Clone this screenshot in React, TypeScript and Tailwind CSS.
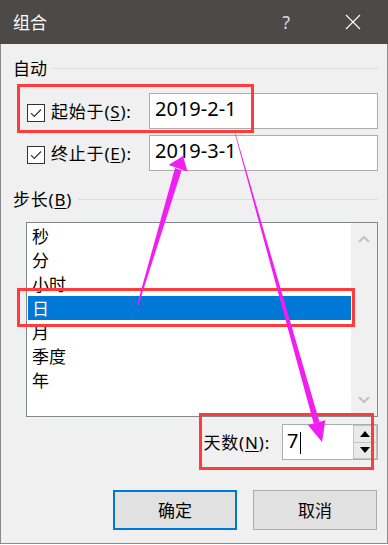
import React from 'react';

const FONT = '"Noto Sans", "Noto Sans CJK SC", sans-serif';

function CheckBox() {
  return (
    <div className="w-[18px] h-[18px] border border-[#333333] bg-white flex items-center justify-center shrink-0">
      <svg width="14" height="14" viewBox="0 0 14 14">
        <path d="M2 7.2 L5.3 10.5 L12 3.5" fill="none" stroke="#333333" strokeWidth="1.2" />
      </svg>
    </div>
  );
}

function Accel({ pre, ch }: { pre: string; ch: string }) {
  return (
    <span className="tracking-[0.8px]">
      {pre}(<span className="underline underline-offset-2">{ch}</span>):
    </span>
  );
}

const ITEMS = ['秒', '分', '小时', '日', '月', '季度', '年'];

export default function App() {
  return (
    <div className="relative w-[388px] h-[545px] bg-white text-[17px] text-black" style={{ fontFamily: FONT }}>
      {/* title bar */}
      <div className="h-[44px] bg-[#4b4a48] flex items-center text-white pl-[13px]">
        <span className="flex-1 leading-none">组合</span>
        <span className="text-[#d8d8d8] text-[18px] mr-[55px] leading-none">?</span>
        <svg width="16" height="16" viewBox="0 0 16 16" className="mr-[27px]">
          <path d="M1 1 L15 15 M15 1 L1 15" stroke="#ffffff" strokeWidth="1.1" />
        </svg>
      </div>

      {/* body */}
      <div className="h-[500px] bg-[#f0f0f0] border-x border-b border-[#8a8a8a] pl-[12px] pr-[9px] flex flex-col">
        <div className="mt-[15px] h-[18px] flex items-center">
          <span className="leading-none">自动</span>
          <div className="flex-1 h-px bg-[#dcdcdc] ml-[5px]" />
        </div>

        <div className="mt-[16px] h-[36px] flex items-center">
          <div className="ml-[14px] mt-[3px]"><CheckBox /></div>
          <div className="w-[98px] ml-[6px] leading-none"><Accel pre="起始于" ch="S" /></div>
          <div className="flex-1 h-[36px] bg-white border border-[#adadad] flex items-center pl-[5px] text-[20px] leading-none pb-[4px]">2019-2-1</div>
        </div>

        <div className="mt-[6px] h-[36px] flex items-center">
          <div className="ml-[14px] mt-[3px]"><CheckBox /></div>
          <div className="w-[98px] ml-[6px] leading-none"><Accel pre="终止于" ch="E" /></div>
          <div className="flex-1 h-[36px] bg-white border border-[#adadad] flex items-center pl-[5px] text-[20px] leading-none pb-[4px]">2019-3-1</div>
        </div>

        <div className="mt-[19px] h-[18px] flex items-center">
          <span className="leading-none tracking-[0.8px]">步长(<span className="underline underline-offset-2">B</span>)</span>
          <div className="flex-1 h-px bg-[#dcdcdc] ml-[6px]" />
        </div>

        <div className="mt-[14px] ml-[13px] h-[195px] bg-white border border-[#828790] flex">
          <div className="flex-1 flex flex-col pt-[1px] pl-[1px]">
            {ITEMS.map((it) => (
              <div
                key={it}
                className={
                  'h-[24px] flex items-center pl-[4px] leading-none ' +
                  (it === '日' ? 'bg-[#0078d7] text-white' : '')
                }
              >
                {it}
              </div>
            ))}
          </div>
          <div className="w-[26px] bg-[#f0f0f0] flex flex-col items-center justify-between py-[12px]">
            <svg width="12" height="8" viewBox="0 0 12 8">
              <path d="M1 7 L6 2 L11 7" fill="none" stroke="#c2c2c2" strokeWidth="2" />
            </svg>
            <svg width="12" height="8" viewBox="0 0 12 8">
              <path d="M1 1 L6 6 L11 1" fill="none" stroke="#c2c2c2" strokeWidth="2" />
            </svg>
          </div>
        </div>

        <div className="mt-[7px] h-[36px] flex items-center justify-end">
          <div className="leading-none mr-[12px]"><Accel pre="天数" ch="N" /></div>
          <div className="w-[96px] h-[36px] bg-white border border-[#adadad] flex">
            <div className="flex-1 flex items-center pl-[4px] text-[20px] leading-none pb-[3px]">
              7<span className="inline-block w-px h-[22px] bg-black ml-[2px] mt-[4px]" />
            </div>
            <div className="w-[24px] flex flex-col">
              <div className="flex-1 bg-[#eaeaea] border border-[#c4c4c4] flex items-center justify-center">
                <svg width="10" height="6" viewBox="0 0 10 6"><path d="M0 6 L5 0 L10 6 Z" fill="#000" /></svg>
              </div>
              <div className="flex-1 bg-[#eaeaea] border border-t-0 border-[#c4c4c4] flex items-center justify-center">
                <svg width="10" height="6" viewBox="0 0 10 6"><path d="M0 0 L5 6 L10 0 Z" fill="#000" /></svg>
              </div>
            </div>
          </div>
        </div>

        <div className="mt-[30px] flex justify-end gap-[16px] pr-px">
          <button className="w-[124px] h-[40px] bg-[#e1e1e1] border-2 border-[#0078d7] leading-none">确定</button>
          <button className="w-[124px] h-[40px] bg-[#e1e1e1] border border-[#adadad] leading-none">取消</button>
        </div>
      </div>

      {/* annotations */}
      <div className="absolute left-[17px] top-[84px] w-[237px] h-[49px] border-[3px] border-[#ff3b3b]" />
      <div className="absolute left-[17px] top-[288px] w-[338px] h-[39px] border-[3px] border-[#ff3b3b]" />
      <div className="absolute left-[199px] top-[413px] w-[175px] h-[57px] border-[3px] border-[#ff3b3b]" />
      <svg className="absolute inset-0 pointer-events-none" width="388" height="545">
        <polygon points="137,305 138.5,305 181.5,170.5 175,168" fill="#f01ef0" />
        <polygon points="183,156 168.5,165 187.5,171.5" fill="#f01ef0" />
        <polygon points="234.7,133 235.3,133 319.5,421.9 313.7,423.5" fill="#f01ef0" />
        <polygon points="322,442 307.9,425.1 325.3,420.3" fill="#f01ef0" />
      </svg>
    </div>
  );
}
